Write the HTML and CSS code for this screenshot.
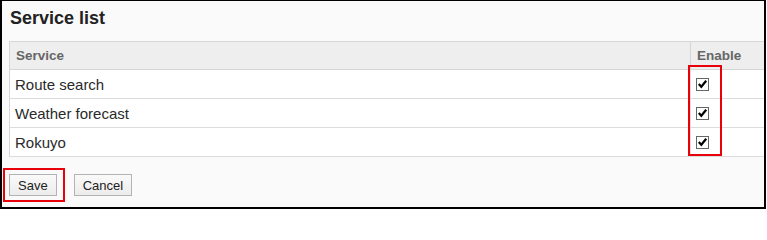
FILE: index.html
```html
<!DOCTYPE html>
<html>
<head>
<meta charset="utf-8">
<link rel="stylesheet" href="styles.css">
</head>
<body>
<div class="frame">
  <h1 class="title">Service list</h1>
  <table class="list">
    <thead>
      <tr><th class="c-name">Service</th><th class="c-enable">Enable</th></tr>
    </thead>
    <tbody>
      <tr><td class="c-name">Route search</td><td class="c-enable"><span class="cb"><svg viewBox="0 0 13 13" width="13" height="13"><path d="M2.8 6 L5.3 8.8 L10.2 2.8" fill="none" stroke="#000" stroke-width="2.2"/></svg></span></td></tr>
      <tr><td class="c-name">Weather forecast</td><td class="c-enable"><span class="cb"><svg viewBox="0 0 13 13" width="13" height="13"><path d="M2.8 6 L5.3 8.8 L10.2 2.8" fill="none" stroke="#000" stroke-width="2.2"/></svg></span></td></tr>
      <tr><td class="c-name">Rokuyo</td><td class="c-enable"><span class="cb"><svg viewBox="0 0 13 13" width="13" height="13"><path d="M2.8 6 L5.3 8.8 L10.2 2.8" fill="none" stroke="#000" stroke-width="2.2"/></svg></span></td></tr>
    </tbody>
  </table>
  <div class="actions">
    <button class="btn">Save</button>
    <button class="btn">Cancel</button>
  </div>
  <div class="mark mark-enable"></div>
  <div class="mark mark-save"></div>
</div>
</body>
</html>
```

FILE: styles.css
```css
html, body {
  margin: 0;
  padding: 0;
  background: #fff;
}
.frame {
  position: relative;
  box-sizing: border-box;
  width: 766px;
  height: 209px;
  border: 2px solid #000;
  border-top-width: 1px;
  background: #fafafa;
  overflow: hidden;
  font-family: "Liberation Sans", Arial, sans-serif;
  color: #333;
}
.title {
  margin: 0;
  padding: 6px 0 0 8px;
  font-size: 18px;
  line-height: 22px;
  font-weight: bold;
  color: #222;
}
.list {
  margin: 12px 0 0 7px;
  width: 770px;
  border-collapse: collapse;
  background: #fff;
  border: 1px solid #d6d6d6;
}
.list th {
  background: #eeeeee;
  color: #666;
  font-size: 13.5px;
  font-weight: bold;
  text-align: left;
  height: 27px;
  padding: 0 6px;
  border: 1px solid #d6d6d6;
}
.list td {
  font-size: 15px;
  height: 28px;
  padding: 0 6px 0 5px;
  border-bottom: 1px solid #dcdcdc;
  color: #2a2a2a;
}
.list td.c-enable {
  border-left: 1px solid #dcdcdc;
  padding-left: 5px;
}
.list th.c-enable {
  padding-left: 6px;
}
.c-name {
  width: 668px;
}
.cb {
  display: block;
  box-sizing: border-box;
  width: 13px;
  height: 13px;
  border: 1px solid #666;
  background: #fff;
  margin-top: 1px;
}
.cb svg {
  display: block;
  margin: -1px 0 0 -1px;
}
.actions {
  display: flex;
  gap: 17px;
  margin: 17px 0 0 7px;
}
.btn {
  box-sizing: border-box;
  height: 22px;
  padding: 0 8px;
  font-family: "Liberation Sans", Arial, sans-serif;
  font-size: 13px;
  color: #222;
  background: linear-gradient(#fafafa, #ececec);
  border: 1px solid #b3b3b3;
  border-radius: 0;
}
.mark {
  position: absolute;
  border: 2px solid #e8000b;
  box-sizing: border-box;
}
.mark-enable {
  left: 686px;
  top: 64px;
  width: 34px;
  height: 91px;
}
.mark-save {
  left: 1px;
  top: 167px;
  width: 62px;
  height: 34px;
}
```
